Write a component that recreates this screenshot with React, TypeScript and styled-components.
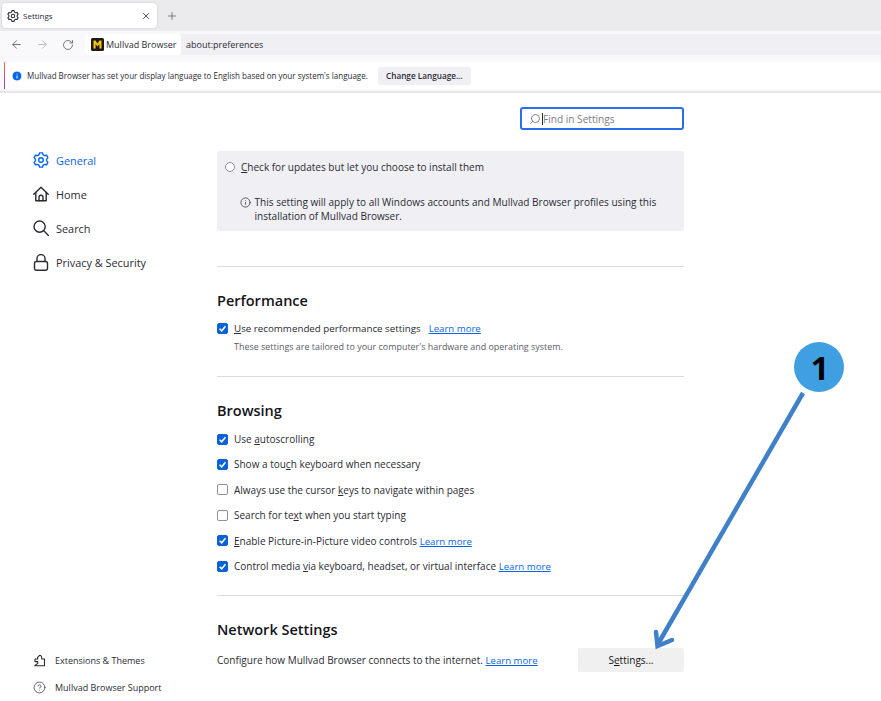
import styled, { createGlobalStyle } from 'styled-components';
import {
  ArrowLeft,
  ArrowRight,
  CircleHelp,
  Info,
  Plus,
  RotateCw,
  Search,
  X,
} from 'lucide-react';

const GlobalStyle = createGlobalStyle`
  html, body {
    margin: 0;
    background: #fff;
    font-family: 'Open Sans', 'Noto Sans', Arial, sans-serif;
    color: #2b2a33;
  }
`;

const Page = styled.div`
  position: relative;
  width: 881px;
  height: 701px;
  overflow: hidden;
  background: #fff;
`;

const TabStrip = styled.div`
  display: flex;
  align-items: center;
  height: 31px;
  padding: 3px 0 3px 2px;
  box-sizing: border-box;
  background: #ebebed;
`;

const Tab = styled.div`
  display: flex;
  align-items: center;
  gap: 4px;
  width: 155px;
  height: 25px;
  padding: 0 6px 0 5px;
  box-sizing: border-box;
  background: #fff;
  border-radius: 4px;
  box-shadow: 0 0 2px rgba(0, 0, 0, 0.18);
  font-size: 8px;
`;

const TabTitle = styled.span`
  flex: 1;
`;

const NewTab = styled.div`
  display: flex;
  margin-left: 9px;
  color: #5b5b66;
`;

const Toolbar = styled.div`
  display: flex;
  align-items: center;
  height: 27px;
  padding-left: 10px;
  background: #f9f9fb;
`;

const NavButton = styled.div<{ $dim?: boolean; $gap: number }>`
  display: flex;
  margin-right: ${(p) => p.$gap}px;
  color: ${(p) => (p.$dim ? '#b4b4ba' : '#5b5b66')};
`;

const UrlBar = styled.div`
  display: flex;
  align-items: center;
  flex: 1;
  height: 21px;
  background: #f0f0f4;
  font-size: 9px;
`;

const Identity = styled.div`
  display: flex;
  align-items: center;
  gap: 2px;
  height: 100%;
  width: 96px;
  padding-left: 6px;
  box-sizing: border-box;
  background: #fff;
  border-radius: 3px;
  margin-right: 5px;
`;

const NoticeWrap = styled.div`
  height: 35px;
  padding-top: 4px;
  box-sizing: border-box;
  background: #f9f9fb;
  border-bottom: 2px solid #e6e6e8;
`;

const Notice = styled.div`
  display: flex;
  align-items: center;
  height: 27px;
  margin-left: 4px;
  padding-left: 6px;
  background: #fff;
  border-left: 1.5px solid;
  border-image: linear-gradient(to bottom, #ff7139, #a02ef0) 1;
  font-size: 8.03px;
`;

const NoticeIcon = styled.span`
  display: flex;
  margin-right: 4px;
`;

const NoticeButton = styled.div`
  display: flex;
  align-items: center;
  justify-content: center;
  width: 93px;
  height: 18px;
  margin-left: 10px;
  background: #f0f0f4;
  border-radius: 2px;
  font-weight: 600;
  font-size: 8.2px;
`;

const Layout = styled.div`
  display: flex;
  height: 608px;
`;

const Sidebar = styled.nav`
  display: flex;
  flex-direction: column;
  justify-content: space-between;
  width: 217px;
  padding: 50px 0 0 33px;
  box-sizing: border-box;
`;

const NavList = styled.div`
  display: flex;
  flex-direction: column;
`;

const NavItem = styled.div<{ $active?: boolean }>`
  display: flex;
  align-items: center;
  gap: 7px;
  height: 34px;
  font-size: 10.9px;
  color: ${(p) => (p.$active ? '#0a66e8' : '#2b2a33')};
`;

const FooterList = styled.div`
  display: flex;
  flex-direction: column;
`;

const FooterItem = styled.div`
  display: flex;
  align-items: center;
  gap: 9px;
  height: 27px;
  font-size: 9px;
`;

const Content = styled.main`
  width: 467px;
  display: flex;
  flex-direction: column;
`;

const SearchRow = styled.div`
  display: flex;
  justify-content: flex-end;
  padding: 14px 0 21px;
`;

const SearchBox = styled.div`
  display: flex;
  align-items: center;
  width: 164px;
  height: 23px;
  padding-left: 7px;
  box-sizing: border-box;
  border: 2px solid #2a6fe8;
  border-radius: 3px;
  font-size: 10.1px;
  color: #7c7c85;
`;

const MirroredSearch = styled(Search)`
  transform: scaleX(-1);
  margin-right: 1px;
`;

const Caret = styled.span`
  width: 1px;
  height: 12px;
  background: #2b2a33;
`;

const UpdatePanel = styled.div`
  height: 80px;
  padding: 0 8px;
  box-sizing: border-box;
  background: #f0f0f4;
  border-radius: 2px;
`;

const RadioRow = styled.div`
  display: flex;
  align-items: center;
  gap: 6px;
  height: 32px;
  font-size: 10.03px;
`;

const Radio = styled.span`
  width: 10px;
  height: 10px;
  box-sizing: border-box;
  border: 1px solid #8f8f9d;
  border-radius: 50%;
  background: #fff;
`;

const PanelNote = styled.div`
  display: flex;
  gap: 4px;
  margin: 12px 0 0 14.5px;
  font-size: 10.05px;
  line-height: 14px;
`;

const NoteIcon = styled.span`
  display: flex;
  flex-shrink: 0;
  margin-top: 2px;
`;

const Divider = styled.hr<{ $top: number }>`
  width: 100%;
  height: 1px;
  margin: ${(p) => p.$top}px 0 0;
  border: 0;
  background: #dcdcde;
`;

const Heading = styled.h2<{ $top: number }>`
  margin: ${(p) => p.$top}px 0 0;
  height: 20px;
  font-size: 14.5px;
  line-height: 20px;
  font-weight: 600;
  color: #15141a;
`;

const CheckRow = styled.div<{ $top?: number; $size?: number }>`
  display: flex;
  align-items: center;
  gap: 6px;
  height: 25.4px;
  margin-top: ${(p) => p.$top ?? 0}px;
  font-size: ${(p) => p.$size ?? 10}px;
`;

const Box = styled.span<{ $checked?: boolean }>`
  display: flex;
  align-items: center;
  justify-content: center;
  width: 11px;
  height: 11px;
  box-sizing: border-box;
  border-radius: 2px;
  border: 1px solid ${(p) => (p.$checked ? '#0b62d6' : '#8f8f9d')};
  background: ${(p) => (p.$checked ? '#0b62d6' : '#fff')};
`;

const LearnMore = styled.a<{ $gap?: number }>`
  color: #0a66e8;
  font-size: 9.65px;
  text-decoration: underline;
  margin-left: ${(p) => p.$gap ?? 0}px;
`;

const AccessKey = styled.u`
  text-underline-offset: 1px;
`;

const Hint = styled.div`
  margin-left: 17px;
  height: 12px;
  font-size: 8.95px;
  line-height: 12px;
  color: #5b5b66;
`;

const NetworkRow = styled.div`
  display: flex;
  align-items: center;
  justify-content: space-between;
  margin-top: 8px;
  font-size: 10px;
`;

const SettingsButton = styled.div`
  display: flex;
  align-items: center;
  justify-content: center;
  width: 106px;
  height: 24px;
  background: #f0f0f0;
  border-radius: 2px;
  color: #15141a;
`;

const AnnotationArrow = styled.svg`
  position: absolute;
  inset: 0;
  pointer-events: none;
`;

const Badge = styled.div`
  position: absolute;
  left: 794px;
  top: 342px;
  width: 50px;
  height: 50px;
  padding-left: 2px;
  box-sizing: border-box;
  display: flex;
  align-items: center;
  justify-content: center;
  border-radius: 50%;
  background: #3f9fe0;
  color: #000;
  font-family: 'Open Sans', Arial, sans-serif;
  font-weight: 700;
  font-size: 32px;
`;

const Check = () => (
  <svg width="9" height="9" viewBox="0 0 10 10" fill="none">
    <path d="M1.8 5.2 4.1 7.5 8.3 2.6" stroke="#fff" strokeWidth="1.7" />
  </svg>
);

const Logo = () => (
  <svg width="13" height="13" viewBox="0 0 13 13">
    <rect width="13" height="13" rx="1.5" fill="#1c1a12" />
    <path d="M2.5 10.5V2.5h2l2 3 2-3h2v8H8.4V6L6.5 8.6 4.6 6v4.5z" fill="#f5c518" />
  </svg>
);

// six lobed gear, one lobe pointing straight up
const gearPath = (() => {
  const pts: string[] = [];
  for (let k = 0; k < 6; k++) {
    const mid = -90 + k * 60;
    const spots: [number, number][] = [
      [5.4, mid - 30],
      [5.9, mid - 19],
      [7.3, mid - 11],
      [7.3, mid + 11],
      [5.9, mid + 19],
    ];
    for (const [r, a] of spots) {
      const rad = (a * Math.PI) / 180;
      pts.push(`${(8 + r * Math.cos(rad)).toFixed(2)} ${(8 + r * Math.sin(rad)).toFixed(2)}`);
    }
  }
  return `M${pts.join('L')}Z`;
})();

const GearIcon = ({ size }: { size: number }) => (
  <svg width={size} height={size} viewBox="0 0 16 16" fill="none" stroke="currentColor" strokeWidth="1.4" strokeLinejoin="round">
    <path d={gearPath} />
    <circle cx="8" cy="8" r="2.3" />
  </svg>
);

const HomeIcon = () => (
  <svg width="16" height="16" viewBox="0 0 16 16" fill="none" stroke="currentColor" strokeWidth="1.4" strokeLinecap="round" strokeLinejoin="round">
    <path d="M.8 8.2 8 1.2l7.2 7" />
    <path d="M2.8 6.6v8.2h10.4V6.6" />
    <path d="M6 14.8v-3.6a2 2 0 0 1 4 0v3.6" />
  </svg>
);

const LensIcon = () => (
  <svg width="16" height="16" viewBox="0 0 16 16" fill="none" stroke="currentColor" strokeWidth="1.4" strokeLinecap="round">
    <circle cx="6.6" cy="6.6" r="5.6" />
    <path d="M10.8 10.8 15.4 15.4" />
  </svg>
);

const LockIcon = () => (
  <svg width="16" height="17" viewBox="0 0 16 17" fill="none" stroke="currentColor" strokeWidth="1.4">
    <rect x="1.5" y="7.5" width="13" height="8.8" rx="2" />
    <path d="M4 7.5V4.6a4 4 0 0 1 8 0v2.9" />
  </svg>
);

const PuzzleIcon = () => (
  <svg width="13" height="13" viewBox="0 0 13 13" fill="none" stroke="#2b2a33" strokeWidth="1.1" strokeLinejoin="round">
    <path d="M1.5 11.8H11.5V5H8.7C9.2 3 8.2 1.3 6.6 1.3L4.6 3.4V5H2V7.6H4.8V9.4L1.5 11.8" />
  </svg>
);

const App = () => (
  <Page>
    <GlobalStyle />
    <TabStrip>
      <Tab>
        <GearIcon size={12} />
        <TabTitle>Settings</TabTitle>
        <X size={10} strokeWidth={2} />
      </Tab>
      <NewTab>
        <Plus size={12} strokeWidth={1.5} />
      </NewTab>
    </TabStrip>
    <Toolbar>
      <NavButton $gap={13}>
        <ArrowLeft size={13} strokeWidth={1.6} />
      </NavButton>
      <NavButton $dim $gap={13}>
        <ArrowRight size={13} strokeWidth={1.6} />
      </NavButton>
      <NavButton $gap={11}>
        <RotateCw size={12} strokeWidth={1.6} />
      </NavButton>
      <UrlBar>
        <Identity>
          <Logo />
          <span>Mullvad Browser</span>
        </Identity>
        about:preferences
      </UrlBar>
    </Toolbar>
    <NoticeWrap>
      <Notice>
        <NoticeIcon>
          <Info size={12} fill="#0a66e8" color="#fff" strokeWidth={2} />
        </NoticeIcon>
        Mullvad Browser has set your display language to English based on your system's language.
        <NoticeButton>Change Language...</NoticeButton>
      </Notice>
    </NoticeWrap>
    <Layout>
      <Sidebar>
        <NavList>
          <NavItem $active>
            <GearIcon size={16} />
            General
          </NavItem>
          <NavItem>
            <HomeIcon />
            Home
          </NavItem>
          <NavItem>
            <LensIcon />
            Search
          </NavItem>
          <NavItem>
            <LockIcon />
            Privacy &amp; Security
          </NavItem>
        </NavList>
        <FooterList>
          <FooterItem>
            <PuzzleIcon />
            Extensions &amp; Themes
          </FooterItem>
          <FooterItem>
            <CircleHelp size={13} strokeWidth={1.3} />
            Mullvad Browser Support
          </FooterItem>
        </FooterList>
      </Sidebar>
      <Content>
        <SearchRow>
          <SearchBox>
            <MirroredSearch size={12} strokeWidth={1.5} color="#5b5b66" />
            <Caret />
            Find in Settings
          </SearchBox>
        </SearchRow>
        <UpdatePanel>
          <RadioRow>
            <Radio />
            <span>
              <AccessKey>C</AccessKey>heck for updates but let you choose to install them
            </span>
          </RadioRow>
          <PanelNote>
            <NoteIcon>
              <Info size={11} strokeWidth={1.6} />
            </NoteIcon>
            <span>
              This setting will apply to all Windows accounts and Mullvad Browser profiles using
              this installation of Mullvad Browser.
            </span>
          </PanelNote>
        </UpdatePanel>
        <Divider $top={35} />
        <Heading $top={24}>Performance</Heading>
        <CheckRow $top={5} $size={9.78}>
          <Box $checked>
            <Check />
          </Box>
          <span>
            <AccessKey>U</AccessKey>se recommended performance settings
            <LearnMore $gap={8}>Learn more</LearnMore>
          </span>
        </CheckRow>
        <Hint>These settings are tailored to your computer's hardware and operating system.</Hint>
        <Divider $top={23} />
        <Heading $top={24}>Browsing</Heading>
        <CheckRow $top={5}>
          <Box $checked>
            <Check />
          </Box>
          <span>
            Use <AccessKey>a</AccessKey>utoscrolling
          </span>
        </CheckRow>
        <CheckRow>
          <Box $checked>
            <Check />
          </Box>
          <span>
            Show a tou<AccessKey>c</AccessKey>h keyboard when necessary
          </span>
        </CheckRow>
        <CheckRow>
          <Box />
          <span>
            Always use the cursor <AccessKey>k</AccessKey>eys to navigate within pages
          </span>
        </CheckRow>
        <CheckRow>
          <Box />
          <span>
            Search for te<AccessKey>x</AccessKey>t when you start typing
          </span>
        </CheckRow>
        <CheckRow>
          <Box $checked>
            <Check />
          </Box>
          <span>
            <AccessKey>E</AccessKey>nable Picture-in-Picture video controls{' '}
            <LearnMore>Learn more</LearnMore>
          </span>
        </CheckRow>
        <CheckRow>
          <Box $checked>
            <Check />
          </Box>
          <span>
            Control media <AccessKey>v</AccessKey>ia keyboard, headset, or virtual interface{' '}
            <LearnMore>Learn more</LearnMore>
          </span>
        </CheckRow>
        <Divider $top={16} />
        <Heading $top={24}>Network Settings</Heading>
        <NetworkRow>
          <span>
            Configure how Mullvad Browser connects to the internet.{' '}
            <LearnMore>Learn more</LearnMore>
          </span>
          <SettingsButton>
            <span>
              S<AccessKey>e</AccessKey>ttings...
            </span>
          </SettingsButton>
        </NetworkRow>
      </Content>
    </Layout>
    <AnnotationArrow width="881" height="701" viewBox="0 0 881 701" fill="none">
      <path d="M803 393 658 644" stroke="#4080c8" strokeWidth="4.5" />
      <path d="M656 632 657.5 646 672 640" stroke="#4080c8" strokeWidth="4.5" strokeLinecap="round" />
    </AnnotationArrow>
    <Badge>1</Badge>
  </Page>
);

export default App;
